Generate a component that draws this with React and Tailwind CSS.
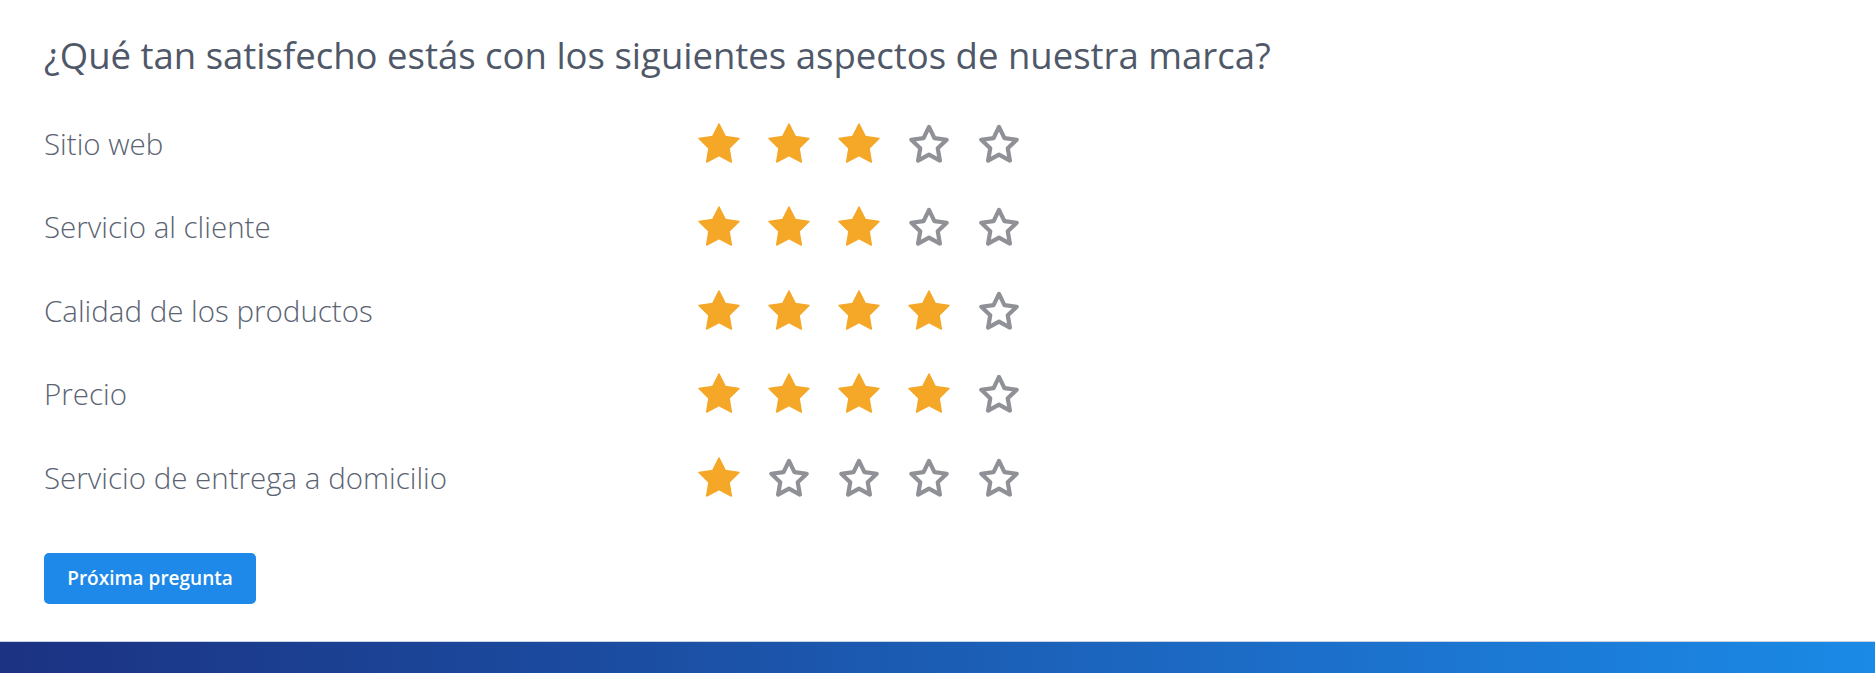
import React from "react";

const ORANGE = "#f5a727";
const GRAY = "#8f9196";

// Five-pointed star, built from alternating outer/inner radii.
function starPoints(cx, cy, R, r) {
  const pts = [];
  for (let i = 0; i < 10; i++) {
    const a = ((-90 + i * 36) * Math.PI) / 180;
    const rad = i % 2 === 0 ? R : r;
    pts.push(`${(cx + rad * Math.cos(a)).toFixed(2)},${(cy + rad * Math.sin(a)).toFixed(2)}`);
  }
  return pts.join(" ");
}

function Star({ filled }) {
  const filledPts = starPoints(21, 22, 21, 10.6);
  const outlinePts = starPoints(21, 22.5, 18.6, 9.2);
  return (
    <svg width="42" height="42" viewBox="0 0 42 42" className="block shrink-0">
      {filled ? (
        <polygon points={filledPts} fill={ORANGE} stroke={ORANGE} strokeWidth="1.5" strokeLinejoin="round" />
      ) : (
        <polygon points={outlinePts} fill="none" stroke={GRAY} strokeWidth="4.2" strokeLinejoin="round" />
      )}
    </svg>
  );
}

const rows = [
  { label: "Sitio web", value: 3 },
  { label: "Servicio al cliente", value: 3 },
  { label: "Calidad de los productos", value: 4 },
  { label: "Precio", value: 4 },
  { label: "Servicio de entrega a domicilio", value: 1 },
];

export default function App() {
  return (
    <div
      className="w-full h-[673px] bg-white flex flex-col"
      style={{ fontFamily: "'Open Sans', 'Noto Sans', sans-serif" }}
    >
      <div className="flex-1 pl-[44px] pt-[33px]">
        <h1 className="text-[36.5px] leading-[44px] font-normal text-[#4f5868]">
          ¿Qué tan satisfecho estás con los siguientes aspectos de nuestra marca?
        </h1>
        <div className="mt-[25px] flex flex-col">
          {rows.map((row) => (
            <div key={row.label} className="h-[83.5px] flex items-center">
              <div className="w-[654px] text-[29.5px] font-light text-[#5b6372]">{row.label}</div>
              <div className="flex items-center gap-[28px]">
                {[1, 2, 3, 4, 5].map((n) => (
                  <Star key={n} filled={n <= row.value} />
                ))}
              </div>
            </div>
          ))}
        </div>
        <button className="mt-[33px] w-[212px] h-[51px] rounded-[5px] bg-[#1e89e8] text-white text-[19px] font-semibold flex items-center justify-center">
          Próxima pregunta
        </button>
      </div>
      <div className="h-[32px] border-t border-[#c9d3e3] bg-[linear-gradient(90deg,#1c3282_0%,#1b4a9e_30%,#1c6fca_70%,#1a8ae6_100%)]" />
    </div>
  );
}
